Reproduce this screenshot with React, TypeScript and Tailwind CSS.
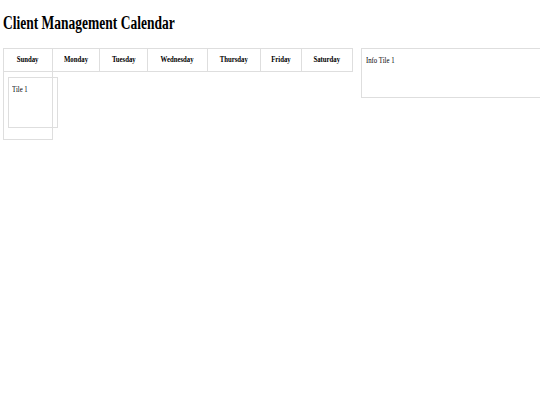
const days = [
  { name: 'Sunday', w: 'w-[50px] border-l' },
  { name: 'Monday', w: 'w-[47px]' },
  { name: 'Tuesday', w: 'w-[48px]' },
  { name: 'Wednesday', w: 'w-[60px]' },
  { name: 'Thursday', w: 'w-[53px]' },
  { name: 'Friday', w: 'w-[41px]' },
  { name: 'Saturday', w: 'w-[51px]' },
];

// narrow serif text, as in the reference
function Txt({ children, center }: { children: React.ReactNode; center?: boolean }) {
  return (
    <span className={`inline-block scale-x-75 ${center ? 'origin-center' : 'origin-left'}`}>
      {children}
    </span>
  );
}

export default function App() {
  return (
    <div className="w-[540px] h-[405px] overflow-hidden bg-white px-[3px] font-['Liberation_Serif',serif] text-black">
      {/* Titre */}
      <h1 className="mt-[13px] text-[18px] font-bold leading-[20px] whitespace-nowrap">
        <Txt>Client Management Calendar</Txt>
      </h1>

      <div className="mt-[15px] flex gap-[8px] items-start">
        {/* Calendrier */}
        <div className="w-[350px] shrink-0">
          <div className="flex h-[24px] border-t border-b border-[#dedede]">
            {days.map((d) => (
              <div
                key={d.name}
                className={`${d.w} shrink-0 border-r border-[#dedede] flex items-center justify-center text-[9px] font-bold whitespace-nowrap`}
              >
                <Txt center>{d.name}</Txt>
              </div>
            ))}
          </div>
          <div className="flex">
            <div className="w-[50px] h-[68px] shrink-0 border-l border-r border-b border-[#dedede] pl-[4px] pt-[5px]">
              <div className="w-[50px] h-[51px] border border-[#dedede] pl-[3px] pt-[6px] text-[9px] leading-[10px] whitespace-nowrap">
                <Txt>Tile 1</Txt>
              </div>
            </div>
          </div>
        </div>

        {/* Info */}
        <div className="w-[220px] h-[50px] shrink-0 border border-[#dedede] pl-[4px] pt-[6px] text-[9px] leading-[10px] whitespace-nowrap">
          <Txt>Info Tile 1</Txt>
        </div>
      </div>
    </div>
  );
}
